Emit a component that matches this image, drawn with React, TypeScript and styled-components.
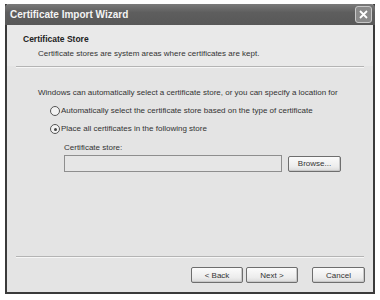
import React from "react";
import styled, { createGlobalStyle } from "styled-components";

const Global = createGlobalStyle`
  html, body { margin: 0; padding: 0; background: #ffffff; }
  body { font-family: "Liberation Sans", Arial, sans-serif; }
`;

const Page = styled.div`
  width: 380px;
  height: 300px;
  padding: 4px 0 0 5px;
  box-sizing: border-box;
`;

const Window = styled.div`
  width: 370px;
  height: 290px;
  box-sizing: border-box;
  border: 2px solid #3a3a3a;
  border-top: none;
  background: #e4e4e4;
  display: flex;
  flex-direction: column;
`;

const TitleBar = styled.div`
  height: 21px;
  margin: 0 -2px;
  background: linear-gradient(#7a7a7a, #5e5e5e 40%, #585858);
  display: flex;
  align-items: center;
  justify-content: space-between;
  padding: 0 3px 0 5px;
  border-radius: 4px 4px 0 0;
`;

const TitleText = styled.span`
  color: #f4f4f4;
  font-family: "Liberation Sans", Arial, sans-serif;
  font-weight: bold;
  font-size: 10px;
`;

const CloseBox = styled.div`
  width: 15px;
  height: 15px;
  border: 1px solid #c8c8c8;
  border-radius: 3px;
  background: #8a8a8a;
  display: flex;
  align-items: center;
  justify-content: center;
`;

const Header = styled.div`
  height: 41px;
  padding: 8px 0 0 16px;
  box-sizing: border-box;
  background: #e9e9e9;
`;

const HeaderTitle = styled.div`
  font-weight: bold;
  font-size: 8.5px;
  color: #222;
  line-height: 12px;
`;

const HeaderSub = styled.div`
  font-size: 8px;
  color: #333;
  line-height: 12px;
  margin-top: 3px;
  padding-left: 15px;
`;

const Rule = styled.div`
  height: 1px;
  margin: 0 9px;
  background: #b4b4b4;
  border-bottom: 1px solid #f6f6f6;
`;

const Body = styled.div`
  flex: 1;
  padding: 19px 0 0 31px;
  font-size: 8px;
  color: #333;
`;

const Line = styled.div`
  line-height: 12px;
  white-space: nowrap;
`;

const RadioRow = styled.div`
  display: flex;
  align-items: center;
  gap: 1px;
  margin-left: 12px;
  margin-top: 6px;
  line-height: 12px;
  white-space: nowrap;
`;

const Radio = styled.span<{ checked?: boolean }>`
  width: 8px;
  height: 8px;
  border-radius: 50%;
  border: 1px solid #555;
  background: #f2f2f2;
  display: inline-flex;
  align-items: center;
  justify-content: center;
  &::after {
    content: "";
    width: 3px;
    height: 3px;
    border-radius: 50%;
    background: ${(p) => (p.checked ? "#444" : "transparent")};
  }
`;

const StoreBlock = styled.div`
  margin: 7px 0 0 26px;
`;

const StoreRow = styled.div`
  display: flex;
  align-items: center;
  gap: 6px;
  margin-top: 1px;
`;

const Field = styled.div`
  width: 216px;
  height: 15px;
  border: 1px solid #8e8e8e;
  background: #e6e6e6;
`;

const Btn = styled.div<{ w: number }>`
  width: ${(p) => p.w}px;
  height: 16px;
  box-sizing: border-box;
  border: 1px solid #6e6e6e;
  border-radius: 2px;
  background: linear-gradient(#fbfbfb, #ececec 70%, #d9d9d9);
  box-shadow: inset -1px -1px 0 #c8c8c8;
  display: flex;
  align-items: center;
  justify-content: center;
  font-size: 8px;
  color: #333;
`;

const Footer = styled.div`
  height: 34px;
  display: flex;
  align-items: center;
  justify-content: flex-end;
  padding-right: 8px;
  gap: 3px;
`;

const Spacer = styled.div`
  width: 8px;
`;

export default function App() {
  return (
    <Page>
      <Global />
      <Window>
        <TitleBar>
          <TitleText>Certificate Import Wizard</TitleText>
          <CloseBox>
            <svg width="9" height="9" viewBox="0 0 9 9">
              <path d="M1 1 L8 8 M8 1 L1 8" stroke="#fff" strokeWidth="1.8" />
            </svg>
          </CloseBox>
        </TitleBar>
        <Header>
          <HeaderTitle>Certificate Store</HeaderTitle>
          <HeaderSub>Certificate stores are system areas where certificates are kept.</HeaderSub>
        </Header>
        <Rule />
        <Body>
          <Line>Windows can automatically select a certificate store, or you can specify a location for</Line>
          <RadioRow>
            <Radio />
            Automatically select the certificate store based on the type of certificate
          </RadioRow>
          <RadioRow>
            <Radio checked />
            Place all certificates in the following store
          </RadioRow>
          <StoreBlock>
            <Line>Certificate store:</Line>
            <StoreRow>
              <Field />
              <Btn w={53}>Browse...</Btn>
            </StoreRow>
          </StoreBlock>
        </Body>
        <Rule />
        <Footer>
          <Btn w={52}>&lt; Back</Btn>
          <Btn w={52}>Next &gt;</Btn>
          <Spacer />
          <Btn w={53}>Cancel</Btn>
        </Footer>
      </Window>
    </Page>
  );
}
